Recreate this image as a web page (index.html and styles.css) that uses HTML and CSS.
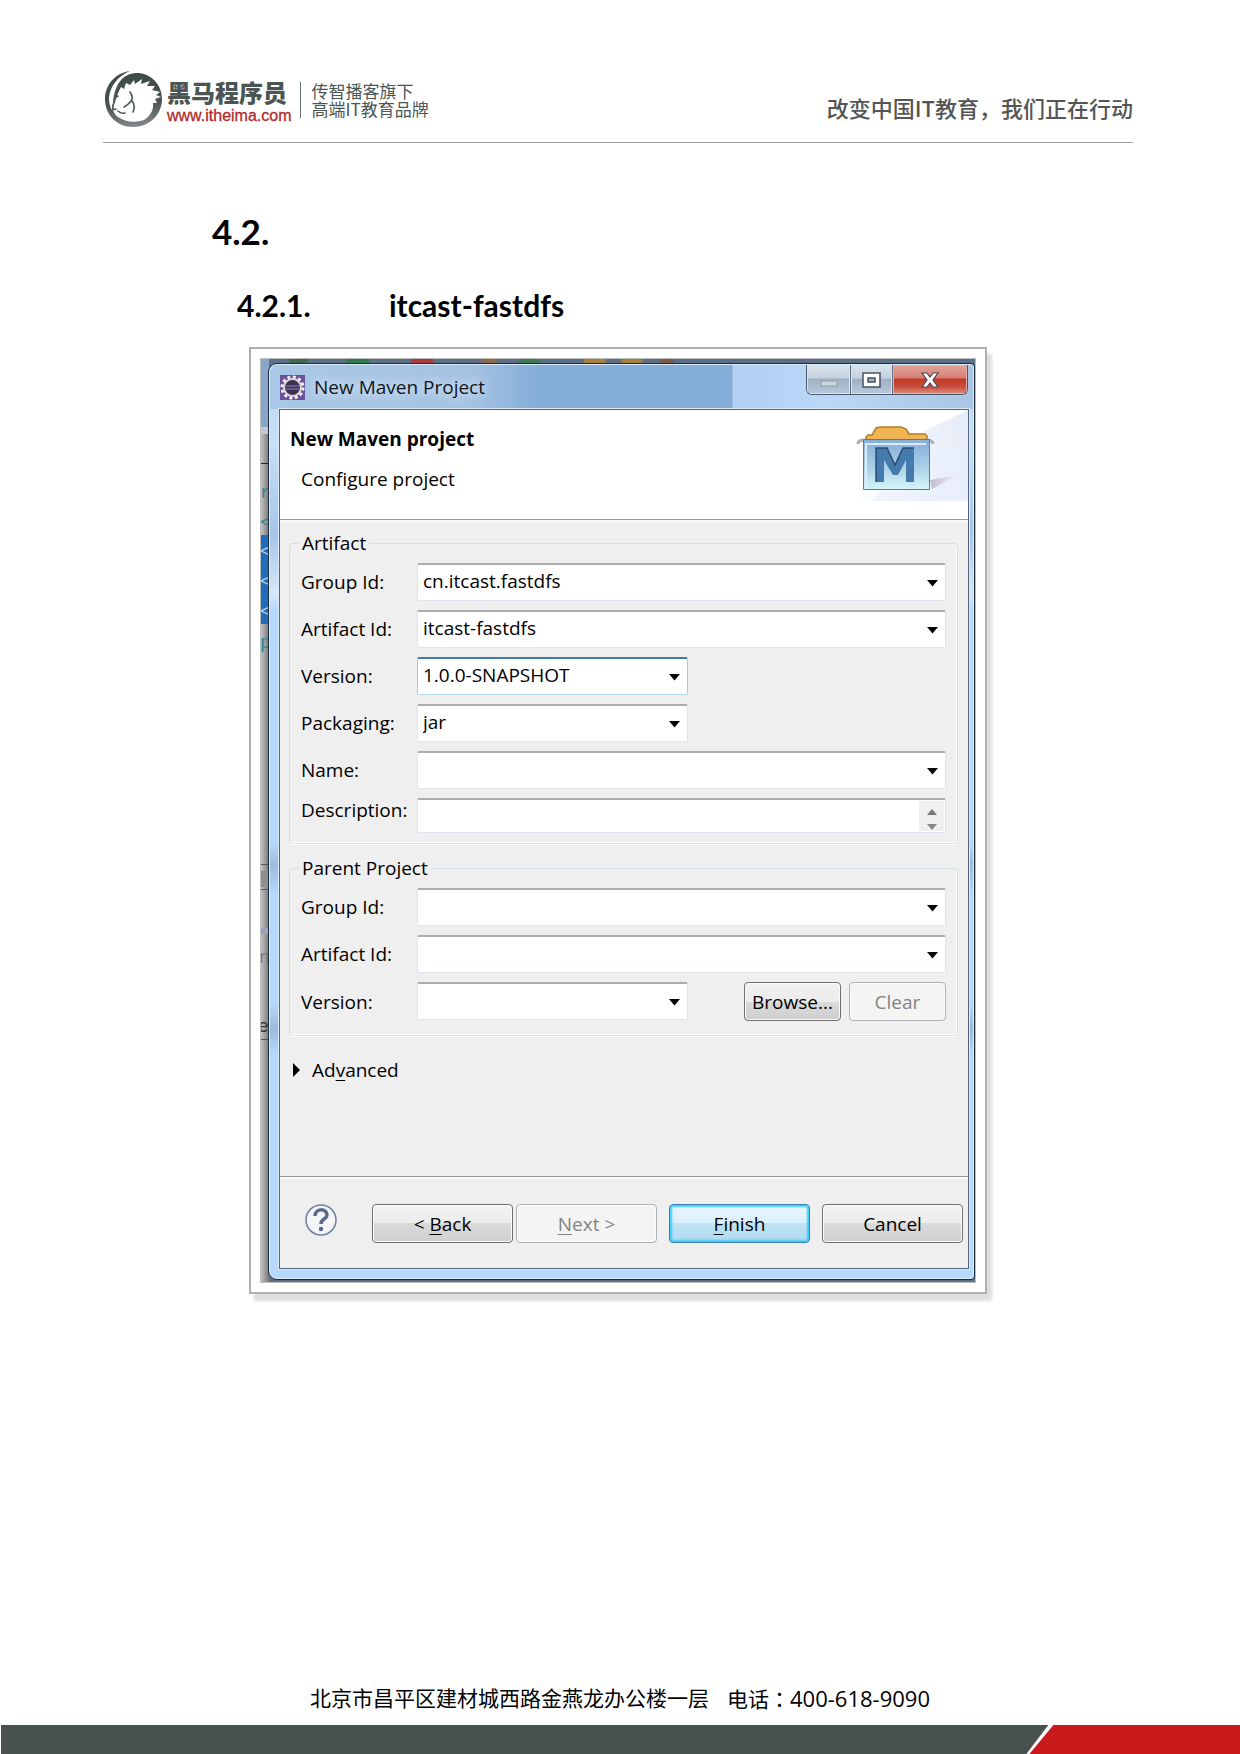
FILE: index.html
```html
<!DOCTYPE html>
<html lang="zh-CN">
<head>
<meta charset="utf-8">
<meta name="viewport" content="width=device-width, initial-scale=1">
<title>4.2.1. itcast-fastdfs</title>
<link rel="stylesheet" href="styles.css">
</head>
<body>
<header class="page-header">
  <div class="brand">
    <svg class="brand-mark" viewBox="0 0 58 58" aria-hidden="true">
      <defs><linearGradient id="ring" x1="0.4" y1="0" x2="0.5" y2="1"><stop offset="0" stop-color="#3c4a46"/><stop offset="0.6" stop-color="#4c5554"/><stop offset="1" stop-color="#85898c"/></linearGradient></defs>
      <path fill="url(#ring)" d="M17 10C22 4 29 3 34 3C48 4 58 15 58 29C58 45 45 57 29 57C13 57 1 45 1 29C1 15 11 3 26 1C14 6 6 16 5 28C5 33 6 37 8 40L9 32C10 23 12 16 17 10Z"/>
      <path fill="#fff" d="M14 23L17 17L20 19L22 13L26 15L30 10L31 14L38 9L37 14L46 11L43 16L51 16L48 20L56 22L52 25L57 27L51 29L53 33L49 33C50 40 46 46 40 50C31 53 21 52 14 47C9 43 8 39 10 35Z"/>
      <path fill="none" stroke="#4c5554" stroke-width="1.600" stroke-linecap="round" d="M26 22Q30 28 27 31Q24 35 20 37M28 31Q32 36 29 42M9 35Q8 41 12 39M14 41Q17 44 21 43M12 27L14 26"/>
    </svg>
    <div class="brand-name">
      <strong>黑马程序员</strong>
      <a href="#">www.itheima.com</a>
    </div>
    <p class="brand-note">传智播客旗下<br>高端IT教育品牌</p>
  </div>
  <p class="motto">改变中国IT教育，我们正在行动</p>
</header>

<main>
  <h2>4.2.</h2>
  <h3><span class="num">4.2.1.</span>itcast-fastdfs</h3>

  <figure>
    <div class="desktop">
      <svg class="behind" width="9" height="921" aria-hidden="true">
        <rect width="9" height="68" fill="#87a6c9"/><rect y="68" width="9" height="7" fill="#c6c6d6"/>
        <rect y="104" width="9" height="1" fill="#222"/>
        <text x="-1" y="139" fill="#2a8590">r</text><text x="-1" y="169" fill="#2a8590">&lt;</text>
        <rect y="176" width="9" height="89" fill="#216bbd"/>
        <text x="-1" y="198" fill="#b7d4ee">&lt;</text><text x="-1" y="228" fill="#b7d4ee">&lt;</text><text x="-1" y="258" fill="#b7d4ee">&lt;</text>
        <text x="-1" y="289" fill="#2a8590">p</text>
        <rect y="505" width="9" height="1" fill="#555"/><rect y="512" width="9" height="16" fill="#8e8e8e"/><rect y="530" width="9" height="1" fill="#555"/>
        <rect y="569" width="9" height="6" fill="#9ea3bb"/>
        <text x="-2" y="604" fill="#777">n</text><text x="-3" y="673" fill="#333">e</text><rect y="680" width="9" height="1" fill="#555"/>
      </svg>
      <section class="window" aria-label="New Maven Project">
        <div class="titlebar">
          <svg class="app-icon" viewBox="0 0 25 25" aria-hidden="true">
            <rect width="25" height="25" fill="#6b519b"/>
            <circle cx="12.500" cy="12.500" r="10.500" fill="none" stroke="#f4f2ee" stroke-width="3" stroke-dasharray="3 2.500"/>
            <circle cx="12.500" cy="12.500" r="8.500" fill="#3c3152" stroke="#dcd8dc" stroke-width="2"/>
            <path d="M5 11h15M5 14h15" stroke="#776a9c" stroke-width="1.500"/>
          </svg>
          <span class="title">New Maven Project</span>
          <div class="controls">
            <button class="min" type="button" aria-label="Minimize"><svg width="18" height="7"><rect x="1" y="1" width="16" height="5" fill="#ccd4dc" stroke="#929ba6"/></svg></button>
            <button class="max" type="button" aria-label="Maximize"><svg width="20" height="16"><path fill="#fff" fill-rule="evenodd" stroke="#4a5160" stroke-width="1.500" d="M1 1h17v14H1ZM6 6v4h7V6Z"/></svg></button>
            <button class="close" type="button" aria-label="Close"><svg width="20" height="16"><path fill="#fff" stroke="#4c4352" stroke-width="1.200" d="M2 1h5l3 4 3-4h5l-5 7 5 7h-5l-3-4-3 4H2l5-7Z"/></svg></button>
          </div>
        </div>
        <form class="client">
          <div class="banner">
            <div>
              <h4>New Maven project</h4>
              <p>Configure project</p>
            </div>
            <svg class="banner-art" viewBox="0 0 116 91" aria-hidden="true">
              <defs>
                <linearGradient id="rays" x1="0" x2="1"><stop offset="0" stop-color="#fff"/><stop offset="1" stop-color="#e5ebf8"/></linearGradient>
                <linearGradient id="box" x1="0" y1="0" x2="0" y2="1"><stop offset="0" stop-color="#85aedb"/><stop offset="0.500" stop-color="#a6cce6"/><stop offset="1" stop-color="#d5f6f7"/></linearGradient>
                <linearGradient id="cast" x1="0" x2="1"><stop offset="0" stop-color="#c3bccd"/><stop offset="1" stop-color="#eef0f9"/></linearGradient>
              </defs>
              <path fill="url(#rays)" d="M0 91L70 22L116 0V91Z"/><path fill="#eaf0fb" opacity=".6" d="M50 60L116 28V91H20Z"/>
              <path fill="url(#cast)" d="M78 70L106 65L80 79Z"/>
              <path fill="#f1b453" stroke="#b37c20" stroke-width="1.500" d="M14 32V27L16 25H20L24 18L28 17H49L54 19L57 24H73L75 26V32Z"/>
              <path fill="none" stroke="#adb0ae" stroke-width="3" d="M6 34Q6 30 12 30M74 30Q81 30 81 34"/>
              <path fill="url(#box)" stroke="#527ea6" d="M11.500 29.500H77.500V79.500H11.500Z"/>
              <path fill="none" stroke="#dcecfb" stroke-width="2" d="M14 78V34H74"/>
              <path fill="#457aad" d="M24 72V38H35L43 55L51 38H62V72H54V50L46 65H41L32 50V72Z"/>
              <path fill="none" stroke="#294e73" stroke-width="1.500" d="M24 72V38H35L43 55L51 38H62"/>
            </svg>
          </div>

          <div class="body">
            <fieldset>
              <legend>Artifact</legend>
              <div class="rows">
                <label for="a-group">Group Id:</label>
                <select id="a-group"><option>cn.itcast.fastdfs</option></select>
                <label for="a-id">Artifact Id:</label>
                <select id="a-id"><option>itcast-fastdfs</option></select>
                <label for="a-ver">Version:</label>
                <select id="a-ver" class="short active"><option>1.0.0-SNAPSHOT</option></select>
                <label for="a-pack">Packaging:</label>
                <select id="a-pack" class="short"><option>jar</option></select>
                <label for="a-name">Name:</label>
                <select id="a-name"><option></option></select>
                <label for="a-desc" class="top">Description:</label>
                <div class="memo">
                  <textarea id="a-desc" rows="1"></textarea>
                  <svg class="scroll" viewBox="0 0 25 30" aria-hidden="true"><path fill="#777" d="M8 14L13 8L18 14Z"/><path fill="#888" d="M8 23H18L13 29Z"/></svg>
                </div>
              </div>
            </fieldset>
            <fieldset>
              <legend>Parent Project</legend>
              <div class="rows parent">
                <label for="p-group">Group Id:</label>
                <select id="p-group"><option></option></select>
                <label for="p-id">Artifact Id:</label>
                <select id="p-id"><option></option></select>
                <label for="p-ver">Version:</label>
                <div class="version-line">
                  <select id="p-ver" class="short"><option></option></select>
                  <div class="pair">
                    <button class="btn" type="button">Browse...</button>
                    <button class="btn" type="button" disabled>Clear</button>
                  </div>
                </div>
              </div>
            </fieldset>
            <button class="advanced" type="button"><svg width="7" height="14" aria-hidden="true"><path d="M0 0L7 7L0 14Z"/></svg><span>Ad<u>v</u>anced</span></button>
          </div>

          <div class="actions">
            <button class="help" type="button" aria-label="Help"><svg viewBox="0 0 32 32"><circle cx="16" cy="16" r="15" fill="#f3f4f7" stroke="#6f7f9d" stroke-width="1.500"/><path fill="none" stroke="#566788" stroke-width="3.500" d="M10 12C10 4 22 4 22 11C22 15 16 15 16 20"/><circle cx="16" cy="25" r="2.200" fill="#566788"/></svg></button>
            <div class="nav">
              <button class="btn" type="button">&lt; <u>B</u>ack</button>
              <button class="btn" type="button" disabled><u>N</u>ext &gt;</button>
            </div>
            <button class="btn primary" type="button"><u>F</u>inish</button>
            <button class="btn" type="button">Cancel</button>
          </div>
        </form>
      </section>
    </div>
  </figure>
</main>

<footer>
  <p><span>北京市昌平区建材城西路金燕龙办公楼一层</span><span>电话<span lang="zh-TW">：</span><span class="phone">400-618-9090</span></span></p>
  <div class="stripe"><i class="dark"></i><i class="red"></i></div>
</footer>
</body>
</html>
```
FILE: styles.css
```css
* { box-sizing: border-box; }

body {
  margin: 0;
  min-height: 100vh;
  display: flex;
  flex-direction: column;
  background: #fff;
  color: #000;
  font-family: "Open Sans", "Noto Sans CJK SC", sans-serif;
}

h2, h3, h4, p, figure { margin: 0; }

/* Page header */
.page-header {
  display: flex;
  justify-content: space-between;
  align-items: flex-start;
  margin: 0 107px 0 103px;
  padding-top: 70px;
  height: 143px;
  border-bottom: 1px solid #9c9f9e;
  color: #4b5553;
  font-family: "Noto Sans CJK SC", sans-serif;
}
.brand { display: flex; }
.brand-mark { width: 58px; height: 58px; margin-left: 1px; }
.brand-name {
  display: flex;
  flex-direction: column;
  gap: 2px;
  padding: 8px 9px 0 5px;
}
.brand-name strong { font-size: 24px; line-height: 28px; font-weight: 900; }
.brand-name a {
  color: #b3282b;
  font: 16px/16px "Liberation Sans", sans-serif;
  -webkit-text-stroke: 0.3px #b3282b;
  text-decoration: none;
}
.brand-note {
  align-self: flex-start;
  margin-top: 12px;
  padding-left: 10px;
  border-left: 1px solid #6b7371;
  font-size: 17px;
  line-height: 18px;
}
.motto {
  padding-top: 22px;
  font-size: 22px;
  line-height: 30px;
  font-weight: 500;
  color: #555;
}

/* Headings */
main { padding: 68px 4px 60px 0; }
h2, h3 { font-family: Lato, sans-serif; font-weight: 700; }
h2 { padding-left: 212px; font-size: 35px; line-height: 40px; }
h3 {
  display: flex;
  padding: 34px 0 22px 237px;
  font-size: 30px;
  line-height: 40px;
}
.num { width: 152px; }

/* Framed dialog */
figure {
  max-width: 738px;
  margin: 0 auto;
  padding: 9px;
  border: 2px solid #b0b0b0;
  background: #fff;
  box-shadow: 5px 7px 3px #dedede;
}
.desktop {
  position: relative;
  padding: 4px 0 2px 7px;
  border: 1px solid #bdbdbd;
  background:
    linear-gradient(90deg, transparent 28px, #3d6a52 28px 47px, transparent 47px 86px, #2e7a4c 86px 108px, transparent 108px 150px, #a83b3b 150px 172px, transparent 172px 220px, #8a6a4a 220px 236px, transparent 236px 258px, #3d7a52 258px 278px, transparent 278px 323px, #a5803d 323px 345px, transparent 345px 361px, #a5803d 361px 381px, transparent 381px 399px, #7a5a4a 399px 413px, transparent 413px) top / 100% 4px no-repeat,
    linear-gradient(90deg, #c2c2c2, #777 8px, #5b6f86 9px);
}
.behind {
  position: absolute;
  left: 0;
  top: 0;
  width: 8px;
  height: 921px;
  font: 18px "Liberation Mono", monospace;
}
.window {
  position: relative;
  padding: 0 5px 10px 10px;
  border: 1px solid #1e2a38;
  border-radius: 9px 4px 4px 9px;
  background: linear-gradient(#bcd5ee, #c8dff7 80px, #a5c6e8 170px, #d6e8fa 230px, #b6d8fd 245px, #b6d8fd 480px, #9dbcdb 500px, #b6d8fd 530px, #b6d8fd 640px, #9bbad9 665px, #b6d8fd 690px, #b6d8fd);
  box-shadow: inset 0 0 0 1px #dcecfb;
  font-size: 19px;
  line-height: 24px;
}
.titlebar {
  display: flex;
  align-items: center;
  height: 44px;
  margin: 1px -4px 0 -9px;
  padding-left: 10px;
  border-radius: 8px 3px 0 0;
  background: linear-gradient(90deg, #a9c7e6, #a4c2e2 200px, #85aed8 270px, #85aed8 462px, #b2d1f3 463px, #bad7f7 560px, #a9c5e3);
}
.app-icon { width: 25px; height: 25px; margin-right: 9px; }
.title {
  color: #10161e;
  text-shadow: 0 0 10px #dbe9f8, 0 0 14px #dbe9f8;
}
.controls {
  display: flex;
  align-self: flex-start;
  margin: 0 5px 0 auto;
  border: 1px solid #48566a;
  border-top: 0;
  border-radius: 0 0 6px 6px;
  overflow: hidden;
}
.controls button {
  display: flex;
  align-items: center;
  justify-content: center;
  width: 42px;
  height: 29px;
  padding: 0;
  border: 0;
  border-right: 1px solid #5d6c80;
  background: linear-gradient(#dbe4ec, #c3d1df 13px, #9fb0c4 14px, #b8c9dc);
  box-shadow: inset 0 0 0 1px #d9e5f1;
}
.controls .min { width: 44px; padding-top: 8px; }
.controls .close {
  width: 74px;
  border-right: 0;
  background: linear-gradient(#e3a49b, #d57f73 13px, #c23724 14px, #c9513c 22px, #dc9182);
  box-shadow: inset 0 0 0 1px #e5b0a8;
}

.client {
  border: 1px solid #53647a;
  outline: 1px solid #dbeafa;
  background: #efefef;
}
.banner {
  display: flex;
  justify-content: space-between;
  height: 110px;
  border-bottom: 1px solid #999;
  background: #fff;
}
.banner > div { padding: 17px 0 0 10px; }
h4 { font-size: 19px; line-height: 24px; font-weight: 700; }
.banner p { padding: 16px 0 0 11px; }
.banner-art { width: 116px; height: 91px; }

.body { padding: 9px 10px 0 9px; border-top: 2px solid #f8f8f8; }
fieldset {
  min-width: 0;
  margin: 0 0 12px;
  padding: 8px 11px 10px;
  border: 1px solid #d3dee5;
  border-radius: 4px;
  box-shadow: inset -1px -1px #fff, 0 1px #fff;
}
legend { margin-left: -2px; padding: 0 3px; }
.rows {
  display: grid;
  grid-template-columns: 116px 1fr;
  row-gap: 9px;
  align-items: center;
}
.rows label { white-space: nowrap; }
.rows .top { align-self: start; }
.parent { padding-bottom: 4px; }

select, textarea {
  width: 100%;
  border: 1px solid #e0e5ec;
  border-top: 2px solid #abadb3;
  border-radius: 2px;
  background: #fff;
  color: #000;
  font: 19px/24px "Open Sans", sans-serif;
}
select {
  appearance: none;
  height: 38px;
  padding: 0 30px 4px 5px;
  background: #fff url("data:image/svg+xml,%3Csvg xmlns='http://www.w3.org/2000/svg' width='11' height='7'%3E%3Cpath d='M0 0H11L5.5 6.500Z'/%3E%3C/svg%3E") no-repeat right 7px top 15px;
}
select.short { width: 271px; }
select.active { border-color: #3d7bad #a4c9e3 #b7d9ed; }
.memo { position: relative; height: 35px; }
textarea { display: block; height: 35px; resize: none; overflow: hidden; }
.scroll {
  position: absolute;
  top: 3px;
  right: 2px;
  width: 25px;
  height: 30px;
  background: #efefef;
}
.version-line { display: flex; justify-content: space-between; }
.pair { display: flex; gap: 8px; }
.pair .btn { width: 97px; }

.btn {
  height: 39px;
  padding: 0;
  border: 1px solid #707070;
  border-radius: 4px;
  background: linear-gradient(#f3f3f3, #ebebeb 50%, #dadada 50%, #cfcfcf);
  box-shadow: inset 0 0 0 1px #fbfbfb;
  color: #000;
  font: 19px/24px "Open Sans", sans-serif;
}
.btn:disabled { border-color: #adb2b5; background: #f4f4f4; color: #838383; }
.btn.primary {
  border-color: #3c7fb1;
  background: linear-gradient(#eaf6fc, #d9effb 50%, #bfe3f5 50%, #b0d9ee);
  box-shadow: inset 0 0 2px 2px #3ecbf8;
}
u { text-underline-offset: 3px; text-decoration-thickness: 1px; }

.advanced {
  display: flex;
  align-items: center;
  gap: 12px;
  margin-top: 22px;
  padding: 0 0 0 4px;
  border: 0;
  background: none;
  font: 19px/24px "Open Sans", sans-serif;
}

.actions {
  display: flex;
  gap: 12px;
  margin-top: 94px;
  padding: 27px 5px 25px 25px;
  border-top: 1px solid #999;
  box-shadow: inset 0 2px #fafafa;
}
.actions .btn { width: 141px; }
.nav { display: flex; gap: 3px; margin-left: auto; }
.help { width: 32px; height: 32px; padding: 0; border: 0; background: none; }
.help svg { display: block; }

/* Page footer */
footer { margin-top: auto; }
footer p {
  display: flex;
  justify-content: center;
  gap: 18px;
  padding-bottom: 10px;
  font: 21px/32px "Open Sans", "Noto Sans CJK TC", sans-serif;
}
.phone { font-size: 22px; }
.stripe { display: flex; height: 29px; padding-left: 1px; }
.stripe .dark {
  flex: 1;
  background: #4a5250;
  clip-path: polygon(0 0, 100% 0, calc(100% - 22px) 100%, 0 100%);
}
.stripe .red {
  width: 17%;
  margin-left: -19px;
  background: #c81a1b;
  clip-path: polygon(24px 0, 100% 0, 100% 100%, 0 100%);
}
```
